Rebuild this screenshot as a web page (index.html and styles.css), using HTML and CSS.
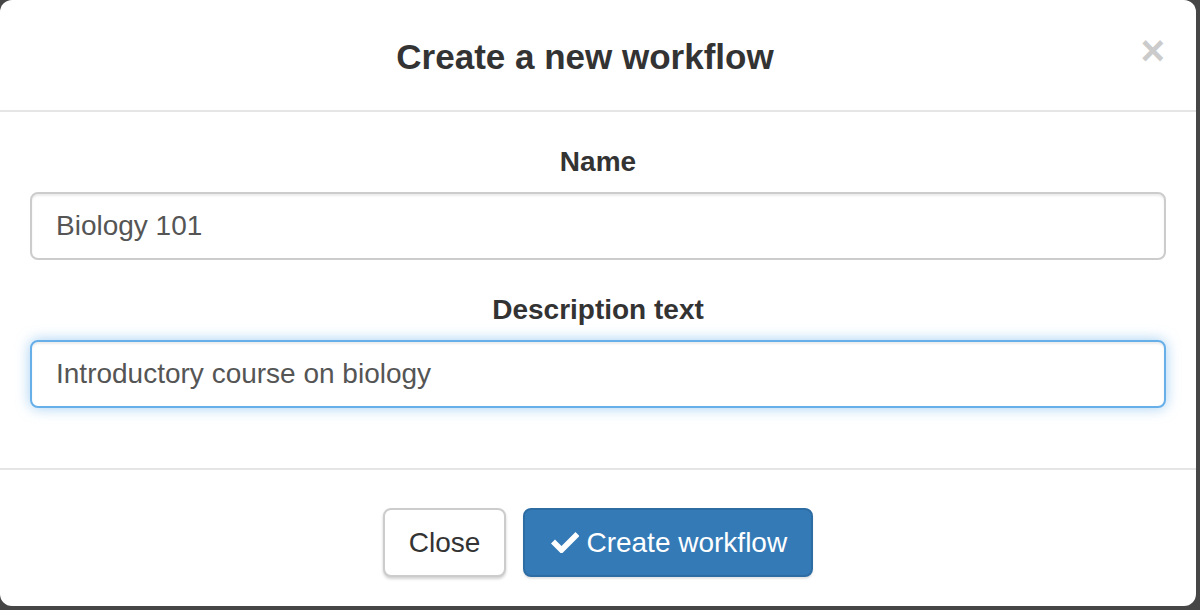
FILE: index.html
```html
<!DOCTYPE html>
<html lang="en">
<head>
  <meta charset="UTF-8">
  <title>Create a new workflow</title>
  <link rel="stylesheet" href="styles.css">
</head>
<body>
  <div class="modal">
    <div class="modal-header">
      <h4 class="modal-title">Create a new workflow</h4>
      <button type="button" class="close">&times;</button>
    </div>

    <form class="modal-body">
      <div class="form-group">
        <label for="name">Name</label>
        <input type="text" id="name" class="form-control" value="Biology 101">
      </div>
      <div class="form-group">
        <label for="description">Description text</label>
        <input type="text" id="description" class="form-control focus" value="Introductory course on biology">
      </div>
    </form>

    <div class="modal-footer">
      <button type="button" class="btn btn-default">Close</button>
      <button type="button" class="btn btn-primary">
        <svg class="icon-ok" viewBox="0 0 28 22" width="28" height="22"><polygon points="0,12.5 4,8.5 10.5,15 24.5,1 28.5,5 10.5,23" fill="#fff"/></svg>
        Create workflow
      </button>
    </div>
  </div>
</body>
</html>
```

FILE: styles.css
```css
* {
  box-sizing: border-box;
}

body {
  margin: 0;
  background: #464646;
  font-family: "Liberation Sans", Arial, Helvetica, sans-serif;
  color: #333;
}

.modal {
  width: 1196px;
  height: 606px;
  background: #fff;
  border-radius: 12px;
  display: flex;
  flex-direction: column;
}

.modal-header {
  position: relative;
  height: 112px;
  border-bottom: 2px solid #e5e5e5;
  display: flex;
  align-items: center;
  justify-content: center;
  padding-right: 26px;
}

.modal-title {
  margin: 4px 0 0;
  font-size: 35px;
  font-weight: bold;
  line-height: 52px;
  color: #333;
}

.close {
  position: absolute;
  top: 30px;
  right: 31px;
  padding: 0;
  border: 0;
  background: none;
  font-family: "Liberation Sans", Arial, sans-serif;
  font-size: 42px;
  font-weight: bold;
  line-height: 42px;
  color: #000;
  opacity: .2;
  cursor: pointer;
}

.modal-body {
  margin: 0;
  padding: 30px;
}

.form-group {
  margin-bottom: 30px;
  text-align: center;
}

.form-group label {
  display: block;
  margin-bottom: 10px;
  font-size: 28px;
  font-weight: bold;
  line-height: 40px;
}

.form-control {
  display: block;
  width: 100%;
  height: 68px;
  padding: 12px 24px;
  font-family: inherit;
  font-size: 28px;
  color: #555;
  background: #fff;
  border: 2px solid #ccc;
  border-radius: 8px;
  box-shadow: inset 0 2px 2px rgba(0, 0, 0, .075);
  outline: none;
}

.form-control.focus {
  border-color: #66afe9;
  box-shadow: inset 0 2px 2px rgba(0, 0, 0, .075), 0 0 14px rgba(102, 175, 233, .6);
}

.modal-footer {
  flex: 1;
  border-top: 2px solid #e5e5e5;
  display: flex;
  justify-content: center;
  align-items: flex-start;
  gap: 17px;
  padding-top: 38px;
}

.btn {
  display: inline-flex;
  align-items: center;
  gap: 7px;
  height: 69px;
  padding: 12px 24px;
  font-family: inherit;
  font-size: 28px;
  line-height: 40px;
  border: 2px solid transparent;
  border-radius: 8px;
  cursor: pointer;
}

.btn-default {
  color: #333;
  background: #fff;
  border-color: #ccc;
  box-shadow: 0 2px 3px rgba(0, 0, 0, .18);
}

.btn-primary {
  color: #fff;
  background: #337ab7;
  border-color: #2e6da4;
  padding-left: 26px;
  box-shadow: 0 2px 2px rgba(0, 0, 0, .1);
}

.icon-ok {
  display: block;
  margin-top: -2px;
}
```
